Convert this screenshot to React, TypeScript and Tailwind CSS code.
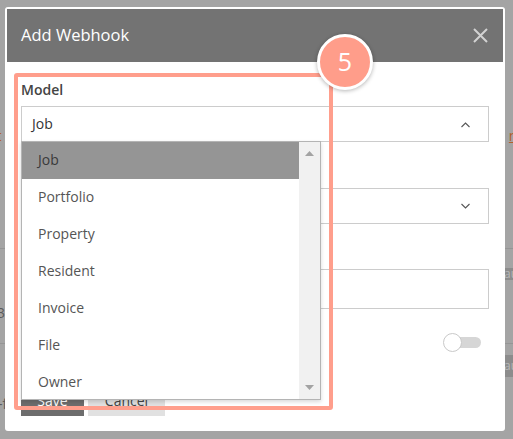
import React from 'react';

const options = ['Job', 'Portfolio', 'Property', 'Resident', 'Invoice', 'File', 'Owner'];

function Chevron({ up }: { up?: boolean }) {
  return (
    <svg width="11" height="7" viewBox="0 0 11 7" className="text-[#555]">
      <path
        d={up ? 'M1.5 6 L5.5 2 L9.5 6' : 'M1.5 1 L5.5 5 L9.5 1'}
        fill="none"
        stroke="currentColor"
        strokeWidth="1.1"
      />
    </svg>
  );
}

function ModelDropdown() {
  return (
    <div className="absolute left-0 top-[35px] w-[300px] h-[259px] bg-white border border-[#b4b4b4] shadow-[0_2px_4px_rgba(0,0,0,0.15)] flex z-10">
      <div className="flex-1 flex flex-col">
        {options.map((o, i) => (
          <div
            key={o}
            className={`h-[37px] shrink-0 flex items-center pl-[16px] pb-[2px] text-[14px] ${
              i === 0 ? 'bg-[#959595] text-[#3a3a3a]' : 'text-[#555]'
            }`}
          >
            {o}
          </div>
        ))}
      </div>
      <div className="w-[21px] bg-[#f1f1f1] flex flex-col items-center justify-between py-[9px]">
        <svg width="9" height="5" viewBox="0 0 9 5">
          <path d="M0 5 L4.5 0 L9 5 Z" fill="#a3a3a3" />
        </svg>
        <svg width="9" height="5" viewBox="0 0 9 5">
          <path d="M0 0 L4.5 5 L9 0 Z" fill="#a3a3a3" />
        </svg>
      </div>
    </div>
  );
}

function Backdrop() {
  return (
    <div className="flex flex-col text-[14px] text-[#5a5a5a]">
      <div className="h-[126px]" />
      <div className="h-[18px] flex justify-between items-center">
        <span className="-ml-[12px] text-[#b0612c]">nt</span>
        <span className="-mr-[12px] text-[#b0612c] underline">ng</span>
      </div>
      <div className="h-[104px]" />
      <div className="h-px bg-[#959595]" />
      <div className="h-[19px]" />
      <div className="h-[12px] flex justify-end">
        <span className="bg-[#8c8c8c] text-[#b8b8b8] text-[12px] leading-[12px] pl-[3px] w-[12px] overflow-hidden">au</span>
      </div>
      <div className="h-[24px]" />
      <div className="h-[16px] flex items-center">
        <span className="-ml-[3px]">3</span>
      </div>
      <div className="h-[23px]" />
      <div className="h-px bg-[#959595]" />
      <div className="h-[11px]" />
      <div className="h-[22px] flex justify-end">
        <span className="bg-[#8c8c8c] text-[#b8b8b8] text-[12px] leading-[22px] pl-[3px] w-[12px] overflow-hidden">au</span>
      </div>
      <div className="h-[19px]" />
      <div className="h-[14px] flex items-center">
        <span className="-ml-[2px]">-f</span>
      </div>
    </div>
  );
}

export default function App() {
  return (
    <div
      className="relative w-[513px] h-[439px] overflow-hidden bg-[#a4a4a4]"
      style={{ fontFamily: '"Open Sans", "Noto Sans", sans-serif' }}
    >
      <Backdrop />

      {/* modal */}
      <div className="absolute left-[5px] top-[7px] w-[500px] h-[424px] bg-white rounded-[3px] p-[2px] flex flex-col">
        <div className="h-[53px] shrink-0 bg-[#737373] flex items-center justify-between pl-[14px] pr-[15px]">
          <span className="text-white text-[16.5px] font-normal">Add Webhook</span>
          <svg width="15" height="15" viewBox="0 0 15 15">
            <path d="M1 1 L14 14 M14 1 L1 14" stroke="#d2d2d2" strokeWidth="2" />
          </svg>
        </div>

        <div className="flex flex-col px-[14px] pt-[18px]">
          <label className="h-[20px] leading-[20px] text-[14px] font-semibold text-[#444]">Model</label>
          <div className="relative mt-[6px]">
            <div className="h-[36px] border border-[#cccccc] flex items-center justify-between pl-[10px] pr-[17px] text-[14px] text-[#333]">
              <span className="pb-[1px]">Job</span>
              <Chevron up />
            </div>
            <ModelDropdown />
          </div>

          {/* Event field (label hidden under the open list) */}
          <div className="mt-[20px] h-[20px]" />
          <div className="mt-[6px] h-[36px] border border-[#cccccc] flex items-center justify-end pr-[17px]">
            <Chevron />
          </div>

          {/* URL field */}
          <div className="mt-[21px] h-[20px]" />
          <div className="mt-[4px] h-[40px] border border-[#cccccc]" />

          <div className="mt-[23px] h-[20px] flex items-center justify-end pr-[8px]">
            <div className="relative w-[38px] h-[20px] flex items-center">
              <div className="ml-[9px] w-[29px] h-[11px] rounded-full bg-[#d6d6d6]" />
              <div className="absolute left-0 top-[0.5px] w-[19px] h-[19px] rounded-full bg-white border border-[#c9c9c9]" />
            </div>
          </div>

          <div className="mt-[33px] flex gap-[4px]">
            <div className="w-[63px] h-[31px] bg-[#6d6d6d] text-white text-[14px] flex items-center justify-center">Save</div>
            <div className="w-[77px] h-[31px] bg-[#e1e1e1] text-[#444] text-[14px] flex items-center justify-center">Cancel</div>
          </div>
        </div>
      </div>

      {/* annotation outline */}
      <div className="absolute left-[14px] top-[73px] w-[319px] h-[337px] border-[4px] border-[#ff9e8c] rounded-[3px] z-20" />
      <div className="absolute left-[317px] top-[34px] w-[56px] h-[56px] rounded-full bg-[#ff9d8a] border-[3px] border-white shadow-[0_1px_4px_rgba(0,0,0,0.3)] flex items-center justify-center text-white text-[25px] z-30">
        5
      </div>
    </div>
  );
}
